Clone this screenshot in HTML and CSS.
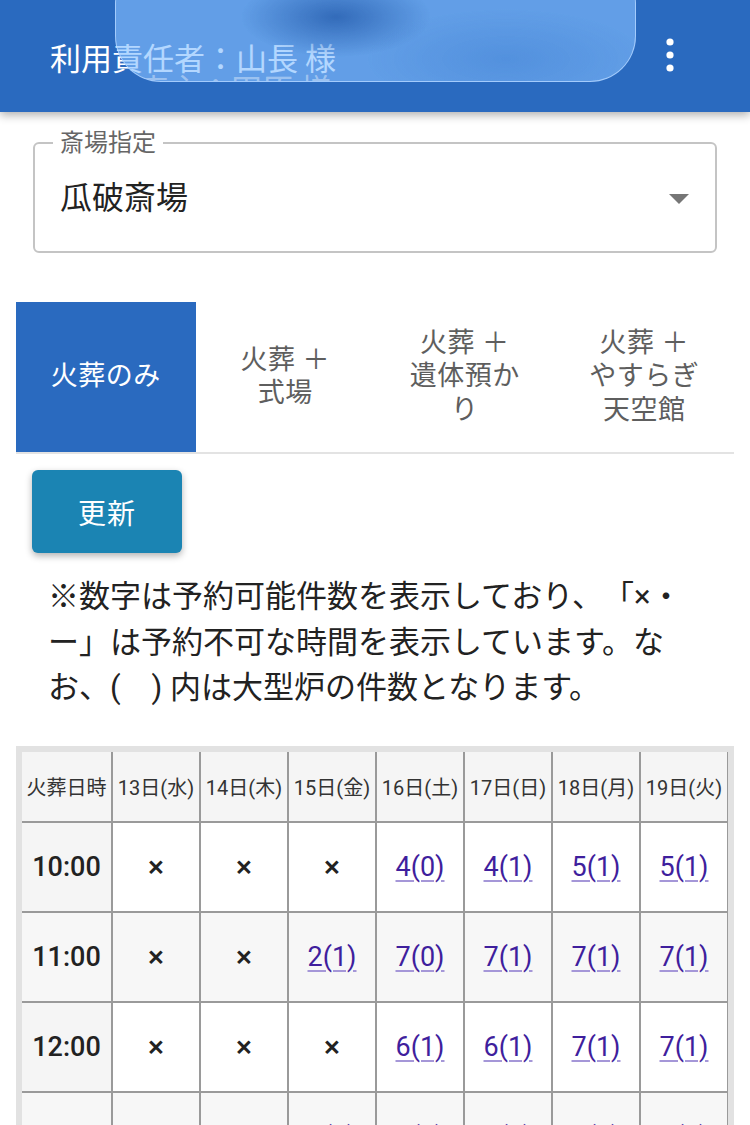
FILE: index.html
```html
<!DOCTYPE html>
<html lang="ja">
<head>
<meta charset="utf-8">
<title>火葬予約</title>
<link rel="stylesheet" href="styles.css">
</head>
<body>
<header class="appbar">
  <h1 class="title">利用責任者：山長 様</h1>
  <button class="menu" aria-label="メニュー">
    <svg width="14" height="40" viewBox="0 0 14 40"><circle cx="7" cy="6" r="3.6" fill="#fff"/><circle cx="7" cy="19" r="3.6" fill="#fff"/><circle cx="7" cy="32" r="3.6" fill="#fff"/></svg>
  </button>
  <div class="island"><span class="island-line">喪主：田原 様</span></div>
</header>

<main class="content">
  <fieldset class="site-field">
    <legend>斎場指定</legend>
    <div class="site-row">
      <span class="site-value">瓜破斎場</span>
      <svg class="site-arrow" width="20" height="10" viewBox="0 0 20 10"><path d="M0 0 L20 0 L10 10 Z" fill="#767676"/></svg>
    </div>
  </fieldset>

  <nav class="tabs">
    <div class="tab active">火葬のみ</div>
    <div class="tab">火葬 ＋<br>式場</div>
    <div class="tab">火葬 ＋<br>遺体預かり</div>
    <div class="tab">火葬 ＋<br>やすらぎ天空館</div>
  </nav>

  <button class="refresh">更新</button>

  <p class="notice">※数字は予約可能件数を表示しており、「×・ー」は予約不可な時間を表示しています。なお、(　) 内は大型炉の件数となります。</p>

  <div class="table-wrap">
    <table class="schedule">
      <colgroup><col class="c-time"><col><col><col><col><col><col><col></colgroup>
      <thead>
        <tr><th>火葬日時</th><th>13日(水)</th><th>14日(木)</th><th>15日(金)</th><th>16日(土)</th><th>17日(日)</th><th>18日(月)</th><th>19日(火)</th></tr>
      </thead>
      <tbody>
        <tr><td class="time">10:00</td><td class="ng">×</td><td class="ng">×</td><td class="ng">×</td><td><a href="#">4(0)</a></td><td><a href="#">4(1)</a></td><td><a href="#">5(1)</a></td><td><a href="#">5(1)</a></td></tr>
        <tr><td class="time">11:00</td><td class="ng">×</td><td class="ng">×</td><td><a href="#">2(1)</a></td><td><a href="#">7(0)</a></td><td><a href="#">7(1)</a></td><td><a href="#">7(1)</a></td><td><a href="#">7(1)</a></td></tr>
        <tr><td class="time">12:00</td><td class="ng">×</td><td class="ng">×</td><td class="ng">×</td><td><a href="#">6(1)</a></td><td><a href="#">6(1)</a></td><td><a href="#">7(1)</a></td><td><a href="#">7(1)</a></td></tr>
        <tr><td class="time">13:00</td><td class="ng">×</td><td class="ng">×</td><td><a href="#">5(1)</a></td><td><a href="#">7(1)</a></td><td><a href="#">7(1)</a></td><td><a href="#">7(1)</a></td><td><a href="#">7(1)</a></td></tr>
      </tbody>
    </table>
  </div>
</main>
</body>
</html>
```

FILE: styles.css
```css
* { box-sizing: border-box; }

html, body {
  margin: 0;
  background: #fff;
}

body {
  font-family: Roboto, "Noto Sans CJK JP", sans-serif;
  color: #222;
  height: 1125px;
  overflow: hidden;
  text-spacing-trim: space-all;
}

/* ---------- app bar ---------- */
.appbar {
  position: relative;
  z-index: 2;
  height: 112px;
  background: #2a6abf;
  display: flex;
  align-items: center;
  justify-content: space-between;
  padding: 0 73px 0 50px;
  box-shadow: 0 3px 9px rgba(0, 0, 0, 0.32);
}

.title {
  margin: 0;
  font-family: "Noto Sans CJK JP", sans-serif;
  font-size: 31px;
  font-weight: 400;
  line-height: 1;
  color: #fff;
  white-space: nowrap;
}

.menu {
  border: 0;
  background: none;
  padding: 0;
  width: 14px;
  height: 40px;
  display: block;
}
.menu svg { display: block; }

.island {
  position: absolute;
  left: 115px;
  top: -42px;
  width: 521px;
  height: 124px;
  border-radius: 46px;
  overflow: hidden;
  border: 1.5px solid rgba(175, 212, 255, 0.85);
  background:
    radial-gradient(ellipse 95px 40px at 220px 58px, rgba(35, 90, 170, 0.75), rgba(35, 90, 170, 0) 100%),
    radial-gradient(ellipse 140px 50px at 390px 100px, rgba(55, 120, 205, 0.35), rgba(55, 120, 205, 0) 100%),
    rgba(132, 191, 255, 0.62);
  padding: 113px 0 0 22px;
}

.island-line {
  display: block;
  font-family: "Noto Sans CJK JP", sans-serif;
  font-size: 31px;
  line-height: 1;
  color: rgba(255, 255, 255, 0.4);
  white-space: nowrap;
}

/* ---------- content ---------- */
.content {
  padding: 0 16px;
}

.site-field {
  margin: 17px 17px 0;
  padding: 0 26px 33px 18px;
  border: 2px solid #c4c4c4;
  border-radius: 6px;
}

.site-field legend {
  padding: 0 7px;
  font-size: 24px;
  line-height: 28px;
  color: #666;
}

.site-row {
  display: flex;
  align-items: center;
  justify-content: space-between;
  margin-top: 21px;
  padding-left: 7px;
}

.site-value {
  font-size: 32px;
  line-height: 40px;
  color: #222;
}

.site-arrow { display: block; margin-top: 2px; }

/* ---------- tabs ---------- */
.tabs {
  display: flex;
  margin-top: 49px;
  border-bottom: 2px solid #e3e3e3;
}

.tab {
  flex: 1 1 0;
  height: 150px;
  display: flex;
  align-items: center;
  justify-content: center;
  text-align: center;
  padding: 0 24px;
  font-size: 27px;
  line-height: 33.5px;
  letter-spacing: 0.5px;
  color: #5e5e5e;
}

.tab.active {
  background: #2a6abf;
  color: #fff;
}

/* ---------- refresh ---------- */
.refresh {
  display: block;
  margin: 16px 0 0 16px;
  width: 150px;
  height: 83px;
  border: 0;
  border-radius: 6px;
  background: #1b84b3;
  color: #fff;
  font-family: inherit;
  font-size: 28px;
  letter-spacing: 1px;
  box-shadow: 0 3px 7px rgba(0, 0, 0, 0.3);
}

/* ---------- notice ---------- */
.notice {
  margin: 21px 0 0;
  padding: 0 32px;
  font-size: 31px;
  line-height: 45.5px;
  color: #222;
}

/* ---------- table ---------- */
.table-wrap {
  margin-top: 35px;
  border: 6px solid #e2e2e2;
  border-bottom: 0;
  overflow: hidden;
  height: 400px;
}

.schedule {
  width: 706px;
  border-collapse: collapse;
  table-layout: fixed;
}

.schedule col { width: 88px; }
.schedule col.c-time { width: 90px; }

.schedule th,
.schedule td {
  border: 2px solid #9a9a9a;
  padding: 0;
  text-align: center;
  vertical-align: middle;
  white-space: nowrap;
}

.schedule th:first-child,
.schedule td:first-child { border-left: 0; }
.schedule thead th { border-top: 0; }

.schedule th {
  height: 70px;
  background: #f5f5f5;
  font-size: 20px;
  font-weight: 400;
  color: #333;
}

.schedule td {
  height: 90px;
  background: #fff;
  font-size: 27px;
}

.schedule tbody tr:nth-child(even) td { background: #f7f7f7; }
.schedule td.time {
  background: #f5f5f5;
  font-weight: 500;
  color: #222;
}

.schedule td.ng {
  font-size: 30px;
  font-weight: 500;
  color: #222;
}

.schedule a {
  color: #3f1f9d;
  text-decoration: underline;
  text-decoration-color: #a597d8;
  text-decoration-thickness: 2px;
  text-underline-offset: 4px;
}
```
